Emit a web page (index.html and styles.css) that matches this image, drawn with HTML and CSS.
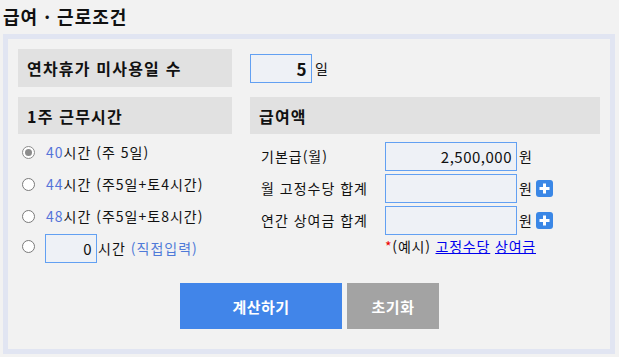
FILE: index.html
```html
<!DOCTYPE html>
<html lang="ko">
<head>
<meta charset="utf-8">
<link rel="stylesheet" href="styles.css">
</head>
<body>
<div class="page">
  <h2 class="title">급여 · 근로조건</h2>
  <div class="box">
    <div class="grid">
      <div class="head">연차휴가 미사용일 수</div>
      <div class="days"><span class="inp inp-days">5</span><span class="unit">일</span></div>

      <div class="head">1주 근무시간</div>
      <div class="head">급여액</div>

      <div class="hours">
        <div class="radio-row"><span class="radio checked"></span><span class="num">40</span><span>시간 (주 5일)</span></div>
        <div class="radio-row"><span class="radio"></span><span class="num">44</span><span>시간 (주5일+토4시간)</span></div>
        <div class="radio-row"><span class="radio"></span><span class="num">48</span><span>시간 (주5일+토8시간)</span></div>
        <div class="radio-row"><span class="radio"></span><span class="inp inp-hours">0</span><span>시간</span><span class="blue">(직접입력)</span></div>
      </div>

      <div class="pay">
        <div class="pay-row"><span class="pay-label">기본급(월)</span><span class="inp inp-pay">2,500,000</span><span class="won">원</span></div>
        <div class="pay-row"><span class="pay-label">월 고정수당 합계</span><span class="inp inp-pay"></span><span class="won">원</span><span class="plus"><svg width="17" height="17" viewBox="0 0 17 17"><rect x="0" y="0" width="17" height="17" rx="3" fill="#3a87e6"/><path d="M8.5 3.5v10M3.5 8.5h10" stroke="#fff" stroke-width="3"/></svg></span></div>
        <div class="pay-row"><span class="pay-label">연간 상여금 합계</span><span class="inp inp-pay"></span><span class="won">원</span><span class="plus"><svg width="17" height="17" viewBox="0 0 17 17"><rect x="0" y="0" width="17" height="17" rx="3" fill="#3a87e6"/><path d="M8.5 3.5v10M3.5 8.5h10" stroke="#fff" stroke-width="3"/></svg></span></div>
        <p class="example"><span class="star">*</span>(예시) <a href="#">고정수당</a> <a href="#">상여금</a></p>
      </div>
    </div>
    <div class="buttons">
      <button class="btn btn-calc">계산하기</button>
      <button class="btn btn-reset">초기화</button>
    </div>
  </div>
</div>
</body>
</html>
```
FILE: styles.css
```css
* { box-sizing: border-box; }
html, body { margin: 0; padding: 0; background: #f2f2f2; }
body {
  font-family: "Noto Sans CJK KR", "Noto Sans", sans-serif;
  font-size: 14px;
  letter-spacing: 1px;
  color: #111;
}
.page { padding: 0 4px 0 3px; width: 619px; }
.title {
  margin: 0;
  font-size: 18px;
  font-weight: bold;
  line-height: 24px;
  letter-spacing: 1px;
  padding: 4px 0 6px;
  color: #111;
}
.box {
  border: 5px solid #e1e5f2;
  background: #f2f2f2;
  padding: 10px 10px 0 10px;
  height: 320px;
}
.grid {
  display: grid;
  grid-template-columns: 214px 350px;
  column-gap: 18px;
  row-gap: 10px;
}
.head {
  background: #e1e1e1;
  height: 38px;
  display: flex;
  align-items: center;
  padding-left: 9px;
  font-size: 16px;
  font-weight: bold;
  letter-spacing: 1.2px;
}
.grid .head:nth-of-type(3),
.grid .head:nth-of-type(4) { height: 37px; }
.days { display: flex; align-items: center; }
.inp {
  display: inline-flex;
  align-items: center;
  justify-content: flex-end;
  border: 1px solid #62a0f2;
  background: #eef1f6;
  height: 29px;
  padding-right: 4px;
  letter-spacing: 0.5px;
}
.inp-days { width: 62px; font-weight: bold; font-size: 17px; }
.unit { margin-left: 3px; font-size: 14px; }
.hours { margin-top: -8px; }
.radio-row {
  height: 32px;
  display: flex;
  align-items: center;
  padding-left: 4px;
}
.radio {
  width: 13px;
  height: 13px;
  border: 1px solid #7a7a7a;
  border-radius: 50%;
  background: #fff;
  margin-right: 11px;
  flex: none;
  position: relative;
}
.radio.checked { border-color: #8c8c8c; background: #fff; }
.radio.checked::after {
  content: "";
  position: absolute;
  left: 2px; top: 2px;
  width: 7px; height: 7px;
  border-radius: 50%;
  background: #8c8c8c;
}
.num { color: #5574d9; }
.blue { color: #4f7ad8; margin-left: 5px; }
.inp-hours { width: 52px; font-size: 15px; margin-right: 1px; margin-left: -1px; }
.radio-row:last-child .radio { margin-top: -3px; }
.pay { margin-top: -4px; }
.pay-row {
  height: 32px;
  display: flex;
  align-items: center;
}
.pay-label { width: 135px; padding-left: 11px; flex: none; }
.inp-pay { width: 132px; font-size: 15px; }
.won { margin-left: 2px; }
.plus { margin-left: 3px; display: inline-flex; }
.example { margin: 0; padding-left: 135px; line-height: 22px; margin-top: -1px; letter-spacing: 0.8px; }
.star { color: #e00; }
.example a { color: #0000ee; text-decoration: underline; }
.buttons {
  display: flex;
  justify-content: center;
  gap: 5px;
  margin-top: 19px;
  padding-left: 1px;
}
.btn {
  border: none;
  height: 46px;
  color: #fff;
  font-family: "Noto Sans CJK KR", "Noto Sans", sans-serif;
  font-size: 15px;
  font-weight: bold;
  letter-spacing: 0.5px;
}
.btn-calc { width: 162px; background: #4185e9; }
.btn-reset { width: 92px; background: #a3a3a3; }
```
